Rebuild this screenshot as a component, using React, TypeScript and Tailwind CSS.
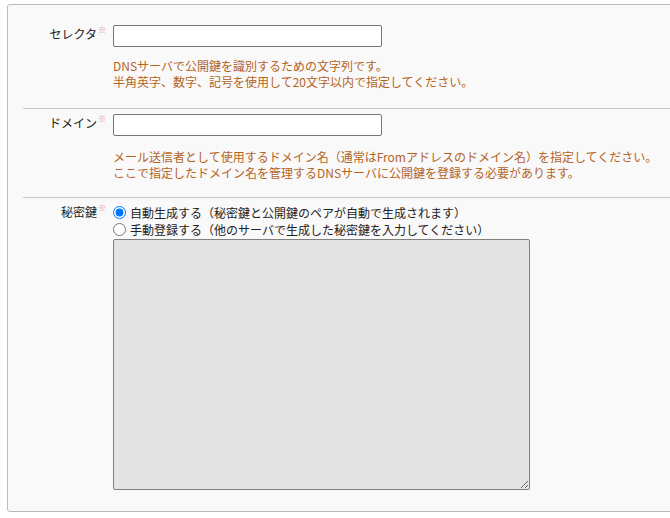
import React from 'react';

const font = { fontFamily: '"Noto Sans CJK JP", "Noto Sans", sans-serif' };

function Label({ children }: { children: React.ReactNode }) {
    return (
        <div className="w-[90px] shrink-0 pr-[7px] text-right text-[12px] leading-[16px] text-[#222]">
            {children}
            <span className="relative -top-[6px] ml-[1px] text-[8px] text-[#de8a8a]">※</span>
        </div>
    );
}

function Help({ lines, top }: { lines: string[]; top: string }) {
    return (
        <div className={`${top} text-[12px] leading-[16px] text-[#b4641f]`}>
            {lines.map((l) => (
                <div key={l}>{l}</div>
            ))}
        </div>
    );
}

export default function App() {
    return (
        <div className="w-[670px] h-[518px] overflow-hidden bg-white pt-[4px] pl-[7px]" style={font}>
            <div className="w-[700px] h-[508px] rounded-[3px] border border-[#bbb] bg-[#f9f9f9] pl-[15px] pt-[20px]">
                {/* selector */}
                <div className="flex border-b border-[#c8c8c8] pb-[18px]">
                    <Label>
                        <span className="inline-block pt-[1px]">セレクタ</span>
                    </Label>
                    <div>
                        <input className="block w-[269px] h-[22px] rounded-[2px] border border-[#767676] bg-white" />
                        <Help
                            top="mt-[11px]"
                            lines={[
                                'DNSサーバで公開鍵を識別するための文字列です。',
                                '半角英字、数字、記号を使用して20文字以内で指定してください。',
                            ]}
                        />
                    </div>
                </div>

                {/* domain */}
                <div className="flex border-b border-[#c8c8c8] pt-[5px] pb-[16px]">
                    <Label>
                        <span className="inline-block pt-[1px]">ドメイン</span>
                    </Label>
                    <div>
                        <input className="block w-[269px] h-[22px] rounded-[2px] border border-[#767676] bg-white" />
                        <Help
                            top="mt-[13px]"
                            lines={[
                                'メール送信者として使用するドメイン名（通常はFromアドレスのドメイン名）を指定してください。',
                                'ここで指定したドメイン名を管理するDNSサーバに公開鍵を登録する必要があります。',
                            ]}
                        />
                    </div>
                </div>

                {/* private key */}
                <div className="flex pt-[6px]">
                    <Label>秘密鍵</Label>
                    <div className="text-[12px] leading-[17px] text-[#222]">
                        <label className="flex items-center gap-[4px]">
                            <input type="radio" name="key" defaultChecked className="m-0 w-[13px] h-[13px]" />
                            自動生成する（秘密鍵と公開鍵のペアが自動で生成されます）
                        </label>
                        <label className="flex items-center gap-[4px]">
                            <input type="radio" name="key" className="m-0 w-[13px] h-[13px]" />
                            手動登録する（他のサーバで生成した秘密鍵を入力してください）
                        </label>
                        <textarea
                            disabled
                            className="mt-[1px] block w-[417px] h-[251px] rounded-[2px] border border-[#808080] bg-[#e3e3e3]"
                        />
                    </div>
                </div>
            </div>
        </div>
    );
}
